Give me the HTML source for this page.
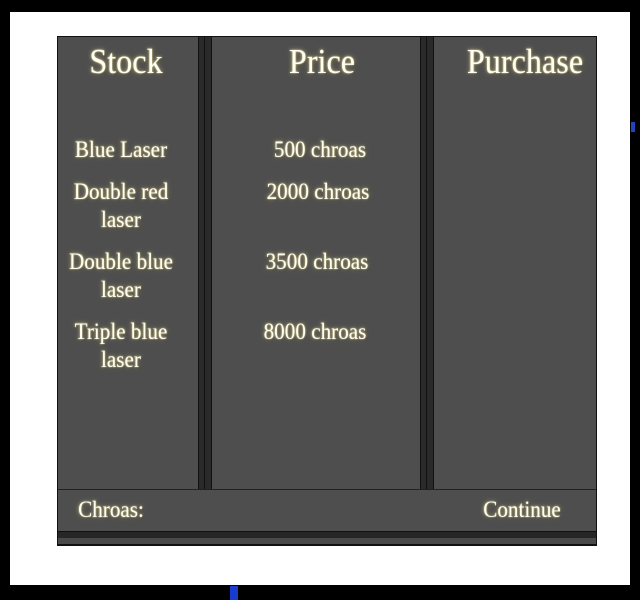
<!DOCTYPE html>
<html><head><style>
body{margin:0;width:640px;height:600px;background:#000;position:relative;overflow:hidden;font-family:"Liberation Serif",serif;}
.w{position:absolute;left:10px;top:12px;width:620px;height:573px;background:#fff;}
.p{position:absolute;left:57px;top:36px;width:538px;height:508px;background:#4e4e4e;border:1px solid #111;}
.d{position:absolute;top:0;height:452px;width:12px;background:#2a2a2a;border-left:1px solid #111;border-right:1px solid #111;}
.d:after{content:"";position:absolute;left:5px;top:0;width:1px;height:100%;background:#111;}
.t{position:absolute;color:#fffef0;text-shadow:0 0 2px #e8e0a8,0 0 5px #b8ad78,1px 1px 3px #222;white-space:nowrap;transform:translateX(-50%) scaleX(0.92);text-align:center;line-height:28px;}
.h{font-size:35px;}
.i{font-size:23px;}
</style></head><body>
<div class="w"></div>
<div class="p">
 <div class="d" style="left:140px"></div>
 <div class="d" style="left:362px"></div>
 <div style="position:absolute;left:0;top:452px;width:538px;height:1px;background:#222"></div>
 <div style="position:absolute;left:0;top:494px;width:538px;height:6px;background:#262626;border-top:1px solid #111"></div>
 <div style="position:absolute;left:0;top:501px;width:538px;height:6px;background:#4a4a4a"></div>
 <div style="position:absolute;left:0;top:507px;width:538px;height:1px;background:#111"></div>
</div>
<div class="t h" style="left:126px;top:48px">Stock</div>
<div class="t h" style="left:322px;top:48px">Price</div>
<div class="t h" style="left:525px;top:48px">Purchase</div>
<div class="t i" style="left:121px;top:136px">Blue Laser</div>
<div class="t i" style="left:121px;top:178px">Double red<br>laser</div>
<div class="t i" style="left:121px;top:248px">Double blue<br>laser</div>
<div class="t i" style="left:121px;top:318px">Triple blue<br>laser</div>
<div class="t i" style="left:320px;top:136px">500 chroas</div>
<div class="t i" style="left:318px;top:178px">2000 chroas</div>
<div class="t i" style="left:317px;top:248px">3500 chroas</div>
<div class="t i" style="left:315px;top:318px">8000 chroas</div>
<div class="t i" style="left:111px;top:496px">Chroas:</div>
<div class="t i" style="left:522px;top:496px">Continue</div>
<div style="position:absolute;left:230px;top:586px;width:8px;height:14px;background:#1a3ccc"></div>
<div style="position:absolute;left:631px;top:122px;width:4px;height:10px;background:#2244bb"></div>
</body></html>
